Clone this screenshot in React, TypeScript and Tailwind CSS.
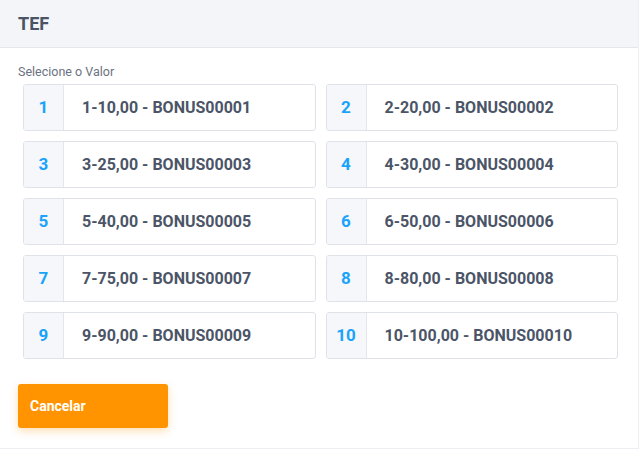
const items = [
  { n: 1, label: "1-10,00 - BONUS00001" },
  { n: 2, label: "2-20,00 - BONUS00002" },
  { n: 3, label: "3-25,00 - BONUS00003" },
  { n: 4, label: "4-30,00 - BONUS00004" },
  { n: 5, label: "5-40,00 - BONUS00005" },
  { n: 6, label: "6-50,00 - BONUS00006" },
  { n: 7, label: "7-75,00 - BONUS00007" },
  { n: 8, label: "8-80,00 - BONUS00008" },
  { n: 9, label: "9-90,00 - BONUS00009" },
  { n: 10, label: "10-100,00 - BONUS00010" },
];

export default function App() {
  return (
    <div className="h-[449px] w-[639px] bg-white font-['Roboto',sans-serif]">
      <div className="flex h-full flex-col border-r border-b border-[#eceef2]">
        <div className="flex h-[48px] items-center border-b border-[#e3e6eb] bg-[#f4f5f8] px-[18px]">
          <h1 className="text-[18px] font-bold text-[#4a5466]">TEF</h1>
        </div>
        <div className="px-[18px] pt-[15px]">
          <p className="text-[12.5px] leading-[18px] text-[#6b7280]">Selecione o Valor</p>
          <div className="mt-[3px] grid grid-cols-2 gap-x-[10px] gap-y-[10px] pl-[5px] pr-[2px]">
            {items.map((it) => (
              <button
                key={it.n}
                className="flex h-[47px] items-stretch overflow-hidden rounded-[3px] border border-[#dfe3e8] bg-white text-left"
              >
                <span className="flex w-[40px] shrink-0 items-center justify-center border-r border-[#e3e6eb] bg-[#f5f7fa] text-[17px] font-bold text-[#1aa3fb]">
                  {it.n}
                </span>
                <span className="flex items-center pl-[18px] text-[16px] font-bold text-[#4b5567]">
                  {it.label}
                </span>
              </button>
            ))}
          </div>
          <button className="mt-[25px] flex h-[44px] w-[150px] items-center rounded-[3px] bg-[#ff9400] px-[12px] text-[14px] font-bold text-white shadow-[0_3px_8px_rgba(255,148,0,0.3)]">
            Cancelar
          </button>
        </div>
      </div>
    </div>
  );
}
